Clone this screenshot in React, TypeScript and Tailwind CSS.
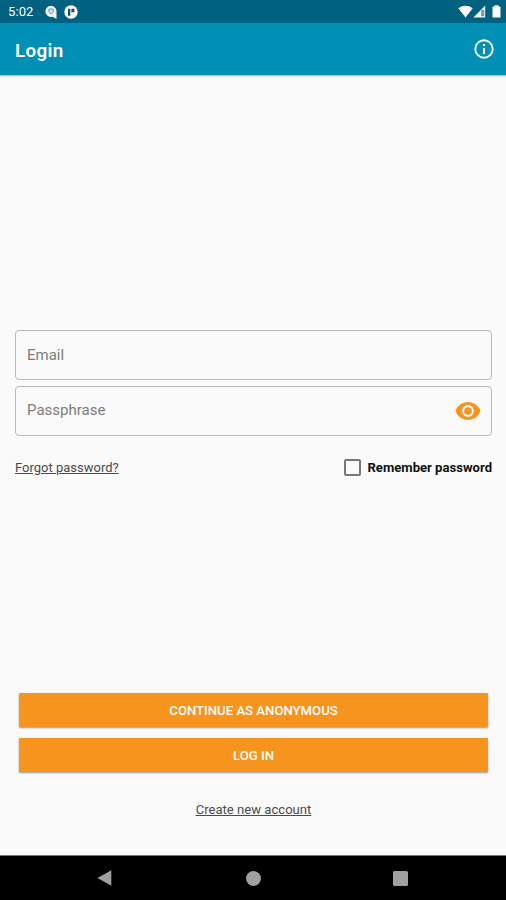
import React from "react";

function StatusBar() {
  return (
    <div className="flex h-[23px] shrink-0 items-center bg-[#006180] pl-2 pr-[5px] text-white">
      <span className="w-[37px] whitespace-nowrap pb-px text-[13px] leading-none tracking-[0.1px]">5:02</span>
      <svg className="mt-px h-[15px] w-[13px]" viewBox="0 0 13 15">
        <path d="M6 .8a5.5 5.5 0 0 1 5.5 5.5V14L7.5 11.8A5.6 5.6 0 1 1 6 .8Z" fill="#f4f8f9" />
        <path d="M3.9 4h4.4v3.2L6.1 9.2 3.9 7.2Z" fill="#d3e2e7" stroke="#5992a5" strokeWidth="0.9" />
      </svg>
      <svg className="ml-[6px] h-[14px] w-[14px]" viewBox="0 0 14 14">
        <circle cx="7" cy="7" r="6.7" fill="#fff" />
        <path d="M4 3.8h2.3v7H4ZM7.4 3.8h3v3.4h-3Z" fill="#174e60" />
      </svg>
      <div className="ml-auto flex items-center">
        <svg className="h-[13px] w-[15px]" viewBox="0 0 15 13">
          <path d="M.3 3.2Q7.5-1.6 14.7 3.2L7.5 12.4Z" fill="#fff" />
        </svg>
        <svg className="h-[13px] w-[13px]" viewBox="0 0 13 13">
          <path d="M.4 12.4 12.2.5v11.9Z" fill="#f1f6f8" />
          <path d="M8.7 5.4h2v5.4h-2Z" fill="#8bb1be" stroke="#437f93" strokeWidth="0.8" />
        </svg>
        <svg className="ml-[6px] h-[13px] w-[9px]" viewBox="0 0 9 13">
          <path d="M2.5.3h4v1.2h1.2q.8 0 .8.8v9.4q0 .9-.9.9H1.4q-.9 0-.9-.9V2.3q0-.8.8-.8h1.2Z" fill="#fff" />
        </svg>
      </div>
    </div>
  );
}

function EyeIcon() {
  return (
    <svg className="h-[18px] w-[26px]" viewBox="0 0 26 18">
      <path d="M13 0C7.2 0 2.4 3.7.5 9c1.9 5.3 6.7 9 12.5 9s10.6-3.7 12.5-9C23.6 3.7 18.8 0 13 0Z" fill="#f7931e" />
      <circle cx="13" cy="9" r="4.9" fill="#f7931e" stroke="#fafafa" strokeWidth="2.1" />
    </svg>
  );
}

export default function App() {
  return (
    <div className="flex h-[900px] w-[506px] flex-col overflow-hidden bg-[#fafafa] font-['Roboto',sans-serif]">
      <StatusBar />
      <header className="flex h-[52px] shrink-0 items-center justify-between bg-[#008fb5] pl-[15px] pr-3 text-white shadow-[0_1px_1px_rgba(0,0,0,0.25)]">
        <h1 className="pt-[3px] text-[18.8px] font-semibold leading-6 tracking-[0.35px]">Login</h1>
        <svg className="h-5 w-5" viewBox="0 0 20 20">
          <circle cx="10" cy="10" r="8.7" fill="none" stroke="#fff" strokeWidth="1.9" />
          <path d="M10 9v6" stroke="#fff" strokeWidth="2" />
          <path d="M10 5v2" stroke="#fff" strokeWidth="2" />
        </svg>
      </header>

      <main className="flex flex-1 flex-col pt-[255px]">
        <div className="ml-[15px] mr-[14px] flex flex-col gap-[6px]">
          <div className="flex h-[50px] items-center rounded-[4px] border border-[#b9b9b9] px-[11px] text-[15px] text-[#7c7c7c]">
            <span className="pt-px">Email</span>
          </div>
          <div className="flex h-[50px] items-center justify-between rounded-[4px] border border-[#b9b9b9] pl-[11px] pr-[10px] text-[15px] text-[#7c7c7c]">
            <span className="pb-px">Passphrase</span>
            <EyeIcon />
          </div>
        </div>
        <div className="ml-[15px] mr-[14px] mt-[22px] flex h-[18px] items-center justify-between">
          <a className="whitespace-nowrap pt-px text-[13px] text-[#4a4a4a] underline">Forgot password?</a>
          <label className="flex items-center whitespace-nowrap text-[13.1px] font-bold text-[#111]">
            <span className="mr-[6px] h-[17px] w-[17px] rounded-[2px] border-2 border-[#777]" />
            <span className="pt-px">Remember password</span>
          </label>
        </div>

        <div className="ml-[19px] mr-[18px] mt-[217px] flex flex-col gap-[11px] text-[13.15px] font-medium text-white">
          <button className="h-[34px] rounded-[1px] bg-[#f7941e] pt-px shadow-[0_1px_2px_rgba(0,0,0,0.4)]">CONTINUE AS ANONYMOUS</button>
          <button className="h-[34px] rounded-[1px] bg-[#f7941e] pt-px shadow-[0_1px_2px_rgba(0,0,0,0.4)]">LOG IN</button>
        </div>
        <a className="ml-px mt-[29px] self-center text-[13.1px] leading-[18px] text-[#4a4a4a] underline">Create new account</a>
      </main>

      <nav className="flex h-[45px] shrink-0 items-center border-t border-[#777] bg-black pl-[97px]">
        <svg className="h-4 w-[15px]" viewBox="0 0 15 16">
          <path d="M.5 8 14.3.3v15.4Z" fill="#a0a0a0" />
        </svg>
        <div className="ml-[134px] h-[15px] w-[15px] rounded-full bg-[#a0a0a0]" />
        <div className="ml-[132px] h-[15px] w-[15px] rounded-[1.5px] bg-[#a0a0a0]" />
      </nav>
    </div>
  );
}
